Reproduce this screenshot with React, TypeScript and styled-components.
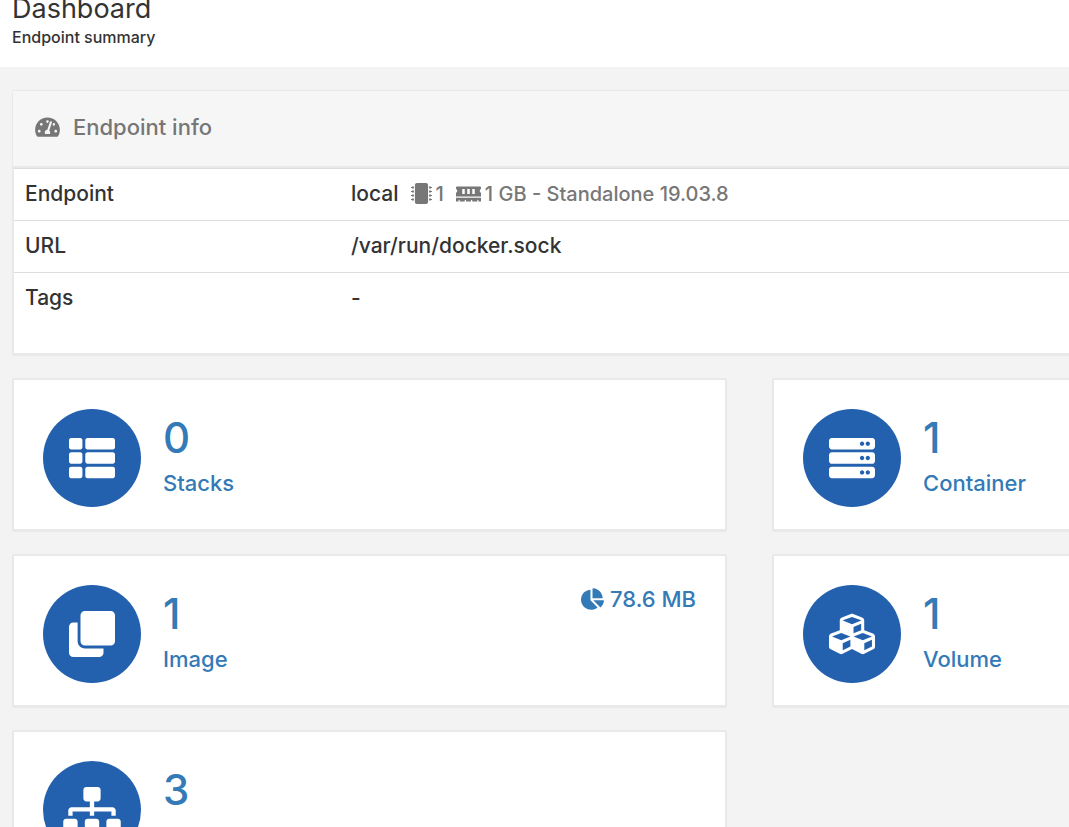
import React from "react";
import styled, { createGlobalStyle } from "styled-components";
import {
  FaTachometerAlt,
  FaThList,
  FaServer,
  FaClone,
  FaCubes,
  FaSitemap,
  FaChartPie,
  FaMemory,
  FaMicrochip,
} from "react-icons/fa";
import type { IconType } from "react-icons";

const GlobalStyle = createGlobalStyle`
  *, *::before, *::after { box-sizing: border-box; }
  body {
    margin: 0;
    background: #f3f3f3;
    color: #333;
    font-family: Inter, "Open Sans", sans-serif;
    font-size: 21px;
    font-weight: 500;
    line-height: 28px;
  }
`;

const Page = styled.div`
  height: 100vh;
  overflow: hidden;
`;

const PageHeader = styled.header`
  padding: 0 12px 18px;
  background: #fff;
`;

const Title = styled.h1`
  margin: 0;
  padding-bottom: 7px;
  font-size: 27px;
  font-weight: 400;
  line-height: 18px;
`;

const Subtitle = styled.p`
  margin: 0;
  font-size: 16px;
  line-height: 24px;
`;

const Content = styled.main`
  display: flex;
  flex-direction: column;
  gap: 23px;
  min-width: 1499px;
  padding: 23px 12px;
`;

const Panel = styled.section`
  border: 1px solid #e9e9e9;
  border-bottom-width: 2px;
  border-radius: 2px;
  background: #fff;
  box-shadow: 0 1px 1px rgba(0, 0, 0, 0.05);
`;

const PanelHeader = styled.div`
  display: flex;
  align-items: center;
  gap: 13px;
  height: 77px;
  padding: 0 22px 3px;
  border-bottom: 2px solid #e9e9e9;
  background: #f6f6f6;
  color: #767676;
`;

const PanelTitle = styled.h2`
  margin: 0;
  font-size: 22px;
  font-weight: 500;
`;

const PanelBody = styled.div`
  padding-bottom: 28px;
  border-left: 1px solid #e9e9e9;
`;

const InfoTable = styled.table`
  width: 100%;
  border-collapse: collapse;
  table-layout: fixed;
`;

const Cell = styled.td`
  height: 52px;
  padding: 0 11px 2px;
  border-top: 1px solid #ddd;
  text-align: left;
`;

const Label = styled(Cell).attrs({ as: "th", scope: "row" })`
  width: 326px;
  font-weight: 500;
`;

const Line = styled.div`
  display: flex;
  align-items: center;
`;

const Specs = styled.span`
  display: flex;
  align-items: center;
  gap: 4px;
  margin-left: 12px;
  color: #777;
  font-size: 20px;
`;

const Glyph = styled.span<{ $w: number; $h: number }>`
  display: flex;
  flex: none;
  svg {
    width: ${(p) => p.$w}px;
    height: ${(p) => p.$h}px;
  }
`;

const Cards = styled.nav`
  display: grid;
  grid-template-columns: 1fr 1fr;
  gap: 23px 45px;
`;

const Card = styled.a`
  display: flex;
  align-items: flex-start;
  gap: 22px;
  height: 153px;
  padding: 29px;
  border: 2px solid #e9e9e9;
  border-radius: 3px;
  background: #fff;
  box-shadow: 0 1px 1px rgba(0, 0, 0, 0.05);
  color: #337ab7;
  text-decoration: none;
`;

const Disc = styled.span`
  display: flex;
  flex: none;
  align-items: center;
  justify-content: center;
  width: 98px;
  height: 98px;
  border-radius: 50%;
  background: #2361ae;
  color: #fff;
`;

const Stat = styled.span`
  display: flex;
  flex: 1;
  flex-direction: column;
`;

const Count = styled.span`
  font-size: 42px;
  line-height: 58px;
`;

const Caption = styled.span`
  font-size: 22px;
  line-height: 32px;
`;

const Size = styled.span`
  display: flex;
  align-items: center;
  gap: 6px;
  font-size: 22px;
  line-height: 28px;
`;

interface Resource {
  icon: IconType;
  iconWidth: number;
  count: number;
  name: string;
  size?: string;
}

const resources: Resource[] = [
  { icon: FaThList, iconWidth: 46, count: 0, name: "Stacks" },
  { icon: FaServer, iconWidth: 46, count: 1, name: "Container" },
  { icon: FaClone, iconWidth: 46, count: 1, name: "Image", size: "78.6 MB" },
  { icon: FaCubes, iconWidth: 46, count: 1, name: "Volume" },
  { icon: FaSitemap, iconWidth: 58, count: 3, name: "Networks" },
];

function ResourceCard({ icon: Icon, iconWidth, count, name, size }: Resource) {
  return (
    <Card href={`#${name.toLowerCase()}`}>
      <Disc>
        <Glyph $w={iconWidth} $h={46}>
          <Icon />
        </Glyph>
      </Disc>
      <Stat>
        <Count>{count}</Count>
        <Caption>{name}</Caption>
      </Stat>
      {size && (
        <Size>
          <Glyph $w={23} $h={22}>
            <FaChartPie />
          </Glyph>
          {size}
        </Size>
      )}
    </Card>
  );
}

export default function App() {
  return (
    <Page>
      <GlobalStyle />
      <PageHeader>
        <Title>Dashboard</Title>
        <Subtitle>Endpoint summary</Subtitle>
      </PageHeader>
      <Content>
        <Panel>
          <PanelHeader>
            <Glyph $w={25} $h={22}>
              <FaTachometerAlt />
            </Glyph>
            <PanelTitle>Endpoint info</PanelTitle>
          </PanelHeader>
          <PanelBody>
            <InfoTable>
              <tbody>
                <tr>
                  <Label>Endpoint</Label>
                  <Cell>
                    <Line>
                      local
                      <Specs>
                        <Glyph $w={21} $h={21}>
                          <FaMicrochip />
                        </Glyph>
                        1
                      </Specs>
                      <Specs>
                        <Glyph $w={25} $h={20}>
                          <FaMemory />
                        </Glyph>
                        1 GB - Standalone 19.03.8
                      </Specs>
                    </Line>
                  </Cell>
                </tr>
                <tr>
                  <Label>URL</Label>
                  <Cell>/var/run/docker.sock</Cell>
                </tr>
                <tr>
                  <Label>Tags</Label>
                  <Cell>-</Cell>
                </tr>
              </tbody>
            </InfoTable>
          </PanelBody>
        </Panel>
        <Cards aria-label="Resources">
          {resources.map((resource) => (
            <ResourceCard key={resource.name} {...resource} />
          ))}
        </Cards>
      </Content>
    </Page>
  );
}
